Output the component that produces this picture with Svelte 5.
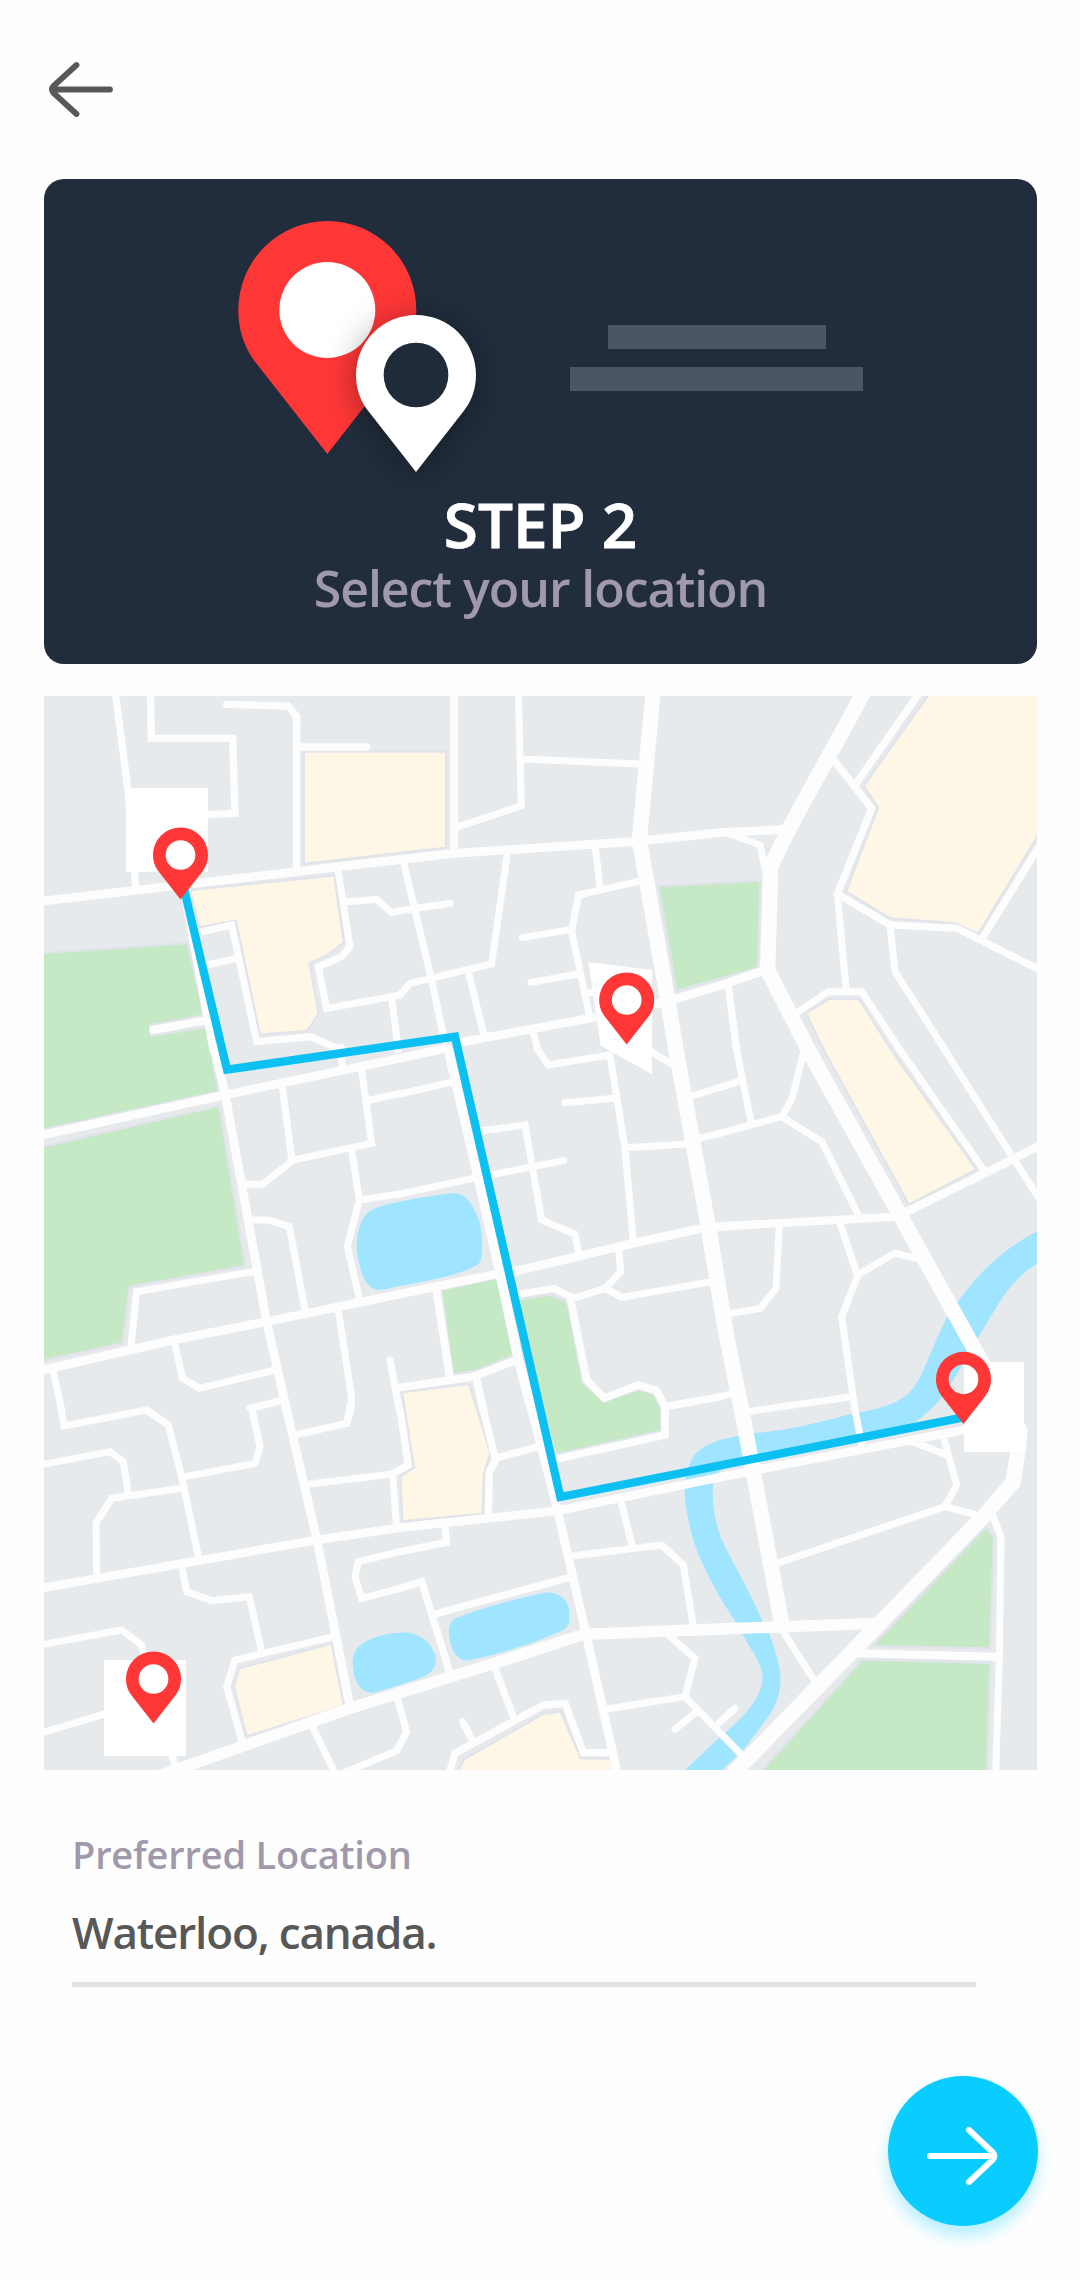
<script>
  // The city map is split into nine sectors. Each sector has its own origin
  // in map units (three units to a pixel) and lists its areas and roads.
  const sectors = [
    {
      x: -12, y: -18,
      areas: [
        ['park', 'M0,793 L440,763 L488,973 L326,1002 L330,1042 L500,1015 L530,1202 L0,1317Z'],
        ['block', 'M795,188 H1215 V470 L1080,485 L795,518Z'],
        ['block', 'M455,603 L880,560 L908,755 L865,790 L805,818 L832,970 L800,1020 L662,1030 L590,688 L480,708Z']
      ],
      roads: [
        [22, 'M225,0 L264,300 L288,600 M331,0 L334,145 H578 L585,370 L480,375 M560,43 L745,48 L770,80 L769,540 M775,171 H980'],
        [26, 'M0,634 L770,545 L1080,509'],
        [24, 'M430,590 L520,1080 M340,1020 L500,990'],
        [21, 'M475,728 L575,705 L650,1055 L810,1040 L905,1080 M500,825 L590,805'],
        [21, 'M895,545 L930,770 L905,800 L835,830 L860,955 L1080,915 M925,635 L1010,628 L1055,668 L1080,662 M1055,925 L1075,1080']
      ]
    },
    {
      x: 1068, y: -18,
      areas: [['park', 'M780,592 L1078,575 L1070,832 L832,898Z']],
      roads: [
        [24, 'M162,0 V480'],
        [21, 'M355,0 L364,347 L175,410 M370,207 L720,222'],
        [46, 'M760,0 L718,450 L805,940 L828,1080'],
        [26, 'M0,509 L160,490 L700,455 L960,428 M190,1055 L570,985 L800,935 L960,887'],
        [21, 'M10,515 L95,870 L133,1050 M0,662 L150,640 M322,490 L275,822 L30,880 L0,915 M205,845 L253,1040 M585,465 L600,590'],
        [21, 'M725,572 L535,615 L515,725 L568,975 M367,743 L515,718 M393,877 L535,852 M555,912 L600,900 M985,890 L1010,1080 M395,1015 L415,1080']
      ]
    },
    {
      x: 2028, y: -18,
      areas: [
        ['block', 'M640,0 L435,288 L478,352 L382,603 L512,682 L708,697 L773,728 L960,420 V0Z'],
        ['block', 'M262,970 L330,930 H415 L510,1080 L764,1437 L568,1540 L315,1080Z']
      ],
      roads: [
        [46, 'M435,0 L205,420 L152,530 L143,840 L265,1080'],
        [26, 'M0,428 L200,418 M0,887 L130,842'],
        [22, 'M604,0 L405,285 M345,215 L455,355 L352,612 L510,705 L712,715 L960,840 M960,465 L790,740'],
        [21, 'M352,612 L378,895 M510,705 L525,845 L675,1080 M235,965 L325,905 H425 L540,1080 M30,432 L120,465 L140,560 M25,890 L50,1080']
      ]
    },
    {
      x: -12, y: 1062,
      areas: [['park', 'M0,295 L535,172 L612,645 L265,708 L245,877 L0,930Z']],
      roads: [
        [26, 'M0,257 L530,140 L1080,25 M0,962 L400,870 L680,815 L1080,732'],
        [26, 'M522,-10 L555,130 L680,815 L740,1080'],
        [21, 'M903,-10 L907,55 M727,110 L755,325 M965,60 L995,280 L760,330 L668,403 H615 M990,150 L1080,130'],
        [21, 'M935,300 L958,450 L922,590 L958,745 M958,450 L1080,432 M635,510 H685 L748,530 L795,780 M640,665 L290,725 L272,895'],
        [21, 'M405,885 L428,985 L478,1015 L705,960 M895,780 L935,1045 L920,1120 M40,965 L65,1080 M630,1075 L730,1050 M1050,930 L1078,1080']
      ]
    },
    {
      x: 1068, y: 1062,
      areas: [
        ['park', 'M128,722 L288,688 L340,912 L230,958 L162,968Z'],
        ['park', 'M340,754 L455,737 L500,760 L545,1000 L610,1055 L715,1022 L760,1035 L780,1080 V1140 L470,1210Z'],
        ['block', 'M10,1030 L205,1005 L268,1210 L248,1270 L245,1388 L10,1410 L5,1280 L45,1255Z'],
        ['water', 'M-80,477 Q-130,500 -130,600 Q-115,715 -65,720 Q-40,718 0,707 Q170,680 232,645 Q246,635 246,600 Q248,560 240,520 Q210,430 165,430 Q110,433 0,455 Q-50,463 -80,477Z']
      ],
      roads: [
        [28, 'M145,0 L235,385 L300,670 L355,930 L395,1080'],
        [26, 'M0,25 L140,-5 M0,732 L300,670 M340,665 L700,580 L905,535 L990,528'],
        [46, 'M828,0 L925,530 L980,860'],
        [21, 'M240,243 L375,225 L425,510 L525,553 L535,605 M0,432 L230,383 L490,332 M0,132 L160,95 M410,-5 L445,45 L630,15 L650,140 L675,295 L700,575 M495,158 L645,145 M680,293 L860,282 M745,0 L825,48'],
        [21, 'M875,138 L960,112 M895,265 L960,250 M655,590 L662,665 L615,715 L520,745 L462,715 L345,735 M615,715 L665,742 L935,695'],
        [23, 'M510,740 L560,990 L613,1045 L715,1005 L770,1022 L795,1070 M795,1070 L960,1040 M795,1070 V1155 L480,1225'],
        [24, 'M108,710 L150,985 M0,1012 L220,980 L350,930 M230,990 L250,1080']
      ]
    },
    {
      x: 2028, y: 1062,
      areas: [],
      roads: [
        [46, 'M265,0 L540,495 L790,945 M-40,500 L20,860 L65,1080'],
        [25, 'M-10,530 L530,500 L795,370 L960,286'],
        [21, 'M50,0 L93,215 M0,112 L65,92 M0,250 L185,200 M250,10 L215,150 L185,200 L305,275 L415,495 M540,0 L795,365 M675,0 L880,325 L960,450'],
        [21, 'M178,525 L168,715 L120,775 L35,790 M360,520 L412,675 L525,610 L590,625 M412,680 L365,800 L405,1080 M80,1085 L395,1040 M0,1040 L40,1030']
      ]
    },
    {
      x: -12, y: 2142,
      areas: [['block', 'M600,778 L872,705 L908,885 L622,975 L585,830Z']],
      roads: [
        [26, 'M0,535 L830,390 L1080,353 M740,0 L830,385 L930,890'],
        [34, 'M350,1100 L930,895 L1080,848'],
        [21, 'M62,-10 L72,48 L320,0 L385,45 L425,200 L475,440 M0,165 L210,125 L250,155 L265,250 M425,235 L215,265 L168,340 L170,495 M435,200 L645,160 L660,110 L635,-5'],
        [21, 'M765,75 L920,40 L935,-10 M810,222 L1055,192 L1080,180 M1058,195 L1070,355 M425,470 L440,545 L515,572 L628,560 L665,725 M890,678 L585,750 L560,830 L605,990'],
        [21, 'M0,705 L245,660 L305,705 L318,760 M0,970 L200,910 M395,1030 L410,1090 M820,955 L885,1090 M1072,865 L1100,965 L1070,1022 L920,1085'],
        [21, 'M1080,425 L955,455 L945,500 L965,565 L1080,535']
      ]
    },
    {
      x: 1068, y: 2142,
      areas: [
        ['block', 'M170,1100 L195,1050 L430,915 L480,908 L540,1048 L630,1050 L640,1100Z'],
        ['water', 'M-125,710 Q-70,665 30,668 Q95,685 108,745 Q108,785 70,800 L0,825 L-80,848 Q-138,850 -142,760 Q-142,730 -125,710Z'],
        ['water', 'M170,623 Q300,575 440,547 Q505,550 508,610 V635 Q503,655 480,665 Q340,725 200,752 Q150,745 146,660 Q148,632 170,623Z']
      ],
      roads: [
        [26, 'M395,0 L470,290 L560,680 L652,1090 M0,353 L470,303 L960,202'],
        [34, 'M0,848 L300,755 L550,673 L960,657'],
        [22, 'M0,0 L25,165 L-20,190 M250,0 L287,150 L268,185 L265,310 M285,145 L415,110 M0,425 L140,397 L135,355 M0,535 L65,515 L150,790 M105,612 L505,503'],
        [21, 'M515,438 L785,405 L850,465 L880,650 M662,270 L697,410 M285,775 L340,920 M187,935 L215,985 M620,897 L855,860 L885,745 L810,680 M855,860 L1025,1035 M825,958 L890,905 M950,945 L1005,895'],
        [22, 'M145,1100 L165,1030 L430,885 L495,880 L550,1028 H630']
      ]
    },
    {
      x: 2028, y: 2142,
      areas: [
        ['water', 'M960,-541 C860,-490 780,-420 710,-320 L680,-275 C640,-200 620,-130 590,-80 C550,-15 480,-5 380,15 C250,50 200,60 100,70 C0,85 -70,105 -90,160 C-110,200 -110,260 -95,330 C-75,440 -10,550 50,640 C90,720 130,760 128,810 C118,880 60,930 -10,990 L-115,1090 L-5,1090 L70,1020 L130,940 C180,880 190,820 175,760 C165,720 150,670 130,640 C80,520 30,450 0,375 C-20,320 -25,260 -20,215 C-15,190 0,180 40,165 L560,55 C640,0 670,-40 700,-90 L770,-210 C850,-340 870,-390 960,-445Z'],
        ['park', 'M797,357 L818,382 L807,712 L465,705Z'],
        ['park', 'M428,752 L807,762 L798,1090 L122,1090Z']
      ],
      roads: [
        [46, 'M900,60 L897,100 L880,215 L790,320 L440,680 L45,1085 M65,0 L185,640'],
        [26, 'M0,202 L150,172 L730,60'],
        [34, 'M0,657 L470,640'],
        [21, 'M405,0 L425,100 M565,90 L680,135 M670,80 L710,225 L675,290 L170,460 M675,290 L760,312 M815,310 L843,380 L838,740 L827,1090 M190,665 L285,815'],
        [24, 'M410,730 L838,740']
      ]
    }
  ];

  // Plots that carry a location pin, in map units.
  const plots = [
    'M246,276 H492 V528 H246Z',
    'M1633,798 L1824,822 V1134 L1693,1062 L1670,1048Z',
    'M2760,1998 H2940 V2268 H2760Z',
    'M180,2892 H426 V3180 H180Z'
  ];
  const pins = [
    [409.5, 477],
    [1748, 912],
    [2758.5, 2050],
    [328.5, 2949]
  ];
  const pinPath =
    'M0,144 L-72,52 C-84,36 -89,18 -89,0 A89,89 0 0 1 89,0 C89,18 84,36 72,52Z M0,-48 A48,48 0 1 0 0,48 A48,48 0 1 0 0,-48Z';
</script>

<main class="screen">
  <header>
    <button class="back" aria-label="Back">
      <svg width="66" height="56" viewBox="0 0 66 56">
        <path d="M61,28.5 H4 M27.5,4 L4.5,25 Q1.5,28.5 4.5,32 L27.5,53" />
      </svg>
    </button>
  </header>

  <section class="step">
    <div class="art">
      <svg class="markers" width="280" height="290" viewBox="0 0 280 290">
        <g transform="translate(109.3 91)">
          <circle r="60" fill="#fff" />
          <path class="red" fill-rule="evenodd" d={pinPath} />
        </g>
        <g class="raised" transform="translate(198 156) scale(.674)">
          <circle r="52" fill="#1f2b39" />
          <path fill="#fff" fill-rule="evenodd" d={pinPath} />
        </g>
      </svg>
      <div class="bars">
        <span class="bar"></span>
        <span class="bar long"></span>
      </div>
    </div>
    <h1>STEP 2</h1>
    <p>Select your location</p>
  </section>

  <svg class="map" viewBox="0 0 2979 3222">
    <rect width="2979" height="3222" fill="#e6eaed" />
    {#each sectors as s}
      <g transform="translate({s.x} {s.y})">
        {#each s.areas as [kind, d]}
          <path class={kind} {d} />
        {/each}
      </g>
    {/each}
    {#each sectors as s}
      <g class="roads" transform="translate({s.x} {s.y})">
        {#each s.roads as [width, d]}
          <path stroke-width={width} {d} />
        {/each}
      </g>
    {/each}
    {#each plots as d}
      <path fill="#fff" {d} />
    {/each}
    <path class="route" d="M418,570 L549,1121 L1233,1022 L1549,2403 L2758,2164" />
    {#each pins as [x, y]}
      <path class="red" fill-rule="evenodd" transform="translate({x} {y}) scale(.928)" d={pinPath} />
    {/each}
  </svg>

  <section class="field">
    <label for="place">Preferred Location</label>
    <div id="place" class="value">Waterloo, canada.</div>
  </section>

  <footer>
    <button class="next" aria-label="Next">
      <svg width="72" height="60" viewBox="0 0 72 60">
        <path d="M3,30 H66 M42,4 L65.5,26 Q69,30 65.5,34 L42,56" />
      </svg>
    </button>
  </footer>
</main>

<style>
  :global(body) {
    margin: 0;
    background: #fefefe;
  }
  .screen {
    box-sizing: border-box;
    width: 1080px;
    height: 2280px;
    padding: 0 43px 0 44px;
    display: flex;
    flex-direction: column;
    overflow: hidden;
    font-family: 'Open Sans', 'Noto Sans', sans-serif;
    font-weight: 600;
  }
  button {
    border: 0;
    padding: 0;
    background: none;
    display: flex;
  }
  header {
    height: 118px;
    padding: 61px 0 0 5px;
    flex: none;
  }
  .back path {
    fill: none;
    stroke: #585858;
    stroke-width: 5.8;
    stroke-linecap: round;
  }
  .step {
    flex: none;
    height: 485px;
    border-radius: 20px;
    background: #212d3d;
    display: flex;
    flex-direction: column;
    align-items: center;
    text-align: center;
  }
  .art {
    width: 100%;
    height: 310px;
    display: flex;
    align-items: flex-start;
  }
  .markers {
    margin: 40px 0 0 174px;
    flex: none;
    overflow: visible;
  }
  .raised {
    filter: drop-shadow(0 6px 24px rgba(0, 0, 0, 0.36));
  }
  .red {
    fill: #ff3737;
  }
  .bars {
    margin: 146px 0 0 72px;
    width: 293px;
    display: flex;
    flex-direction: column;
    align-items: center;
    gap: 18px;
  }
  .bar {
    width: 218px;
    height: 24px;
    background: #4a5666;
  }
  .bar.long {
    width: 293px;
  }
  h1 {
    margin: 0;
    font-size: 62px;
    font-weight: 600;
    line-height: 70px;
    color: #fff;
    -webkit-text-stroke: 0.8px #fff;
  }
  .step p {
    margin: 0;
    font-size: 50px;
    line-height: 58px;
    letter-spacing: -1.05px;
    color: #a099ab;
  }
  .map {
    display: block;
    flex: none;
    width: 993px;
    height: 1074px;
    margin-top: 32px;
  }
  .park {
    fill: #c5e8c5;
  }
  .block {
    fill: #fef7e6;
  }
  .park,
  .block {
    stroke: #e1e4ea;
    stroke-width: 14;
    paint-order: stroke;
  }
  .water {
    fill: #9fe5ff;
  }
  .roads {
    fill: none;
    stroke: #fdfdfd;
    stroke-linecap: round;
  }
  .route {
    fill: none;
    stroke: #0cc1f2;
    stroke-width: 25;
  }
  .field {
    flex: none;
    width: 904px;
    margin: 57px 0 0 28px;
    border-bottom: 5px solid #e2e1e6;
    height: 155px;
    display: flex;
    flex-direction: column;
  }
  label {
    font-size: 38px;
    line-height: 54px;
    letter-spacing: -0.2px;
    color: #a099ab;
  }
  .value {
    margin-top: 21px;
    font-size: 44px;
    line-height: 60px;
    letter-spacing: -1.15px;
    color: #585858;
  }
  footer {
    display: flex;
    justify-content: flex-end;
    margin: 89px -1px 0 0;
  }
  .next {
    width: 150px;
    height: 150px;
    border-radius: 50%;
    background: #0acdff;
    box-shadow: 0 10px 16px rgba(10, 205, 255, 0.3);
    align-items: center;
    justify-content: center;
  }
  .next svg {
    margin-top: 10px;
  }
  .next path {
    fill: none;
    stroke: #fff;
    stroke-width: 6;
    stroke-linecap: round;
  }
</style>
